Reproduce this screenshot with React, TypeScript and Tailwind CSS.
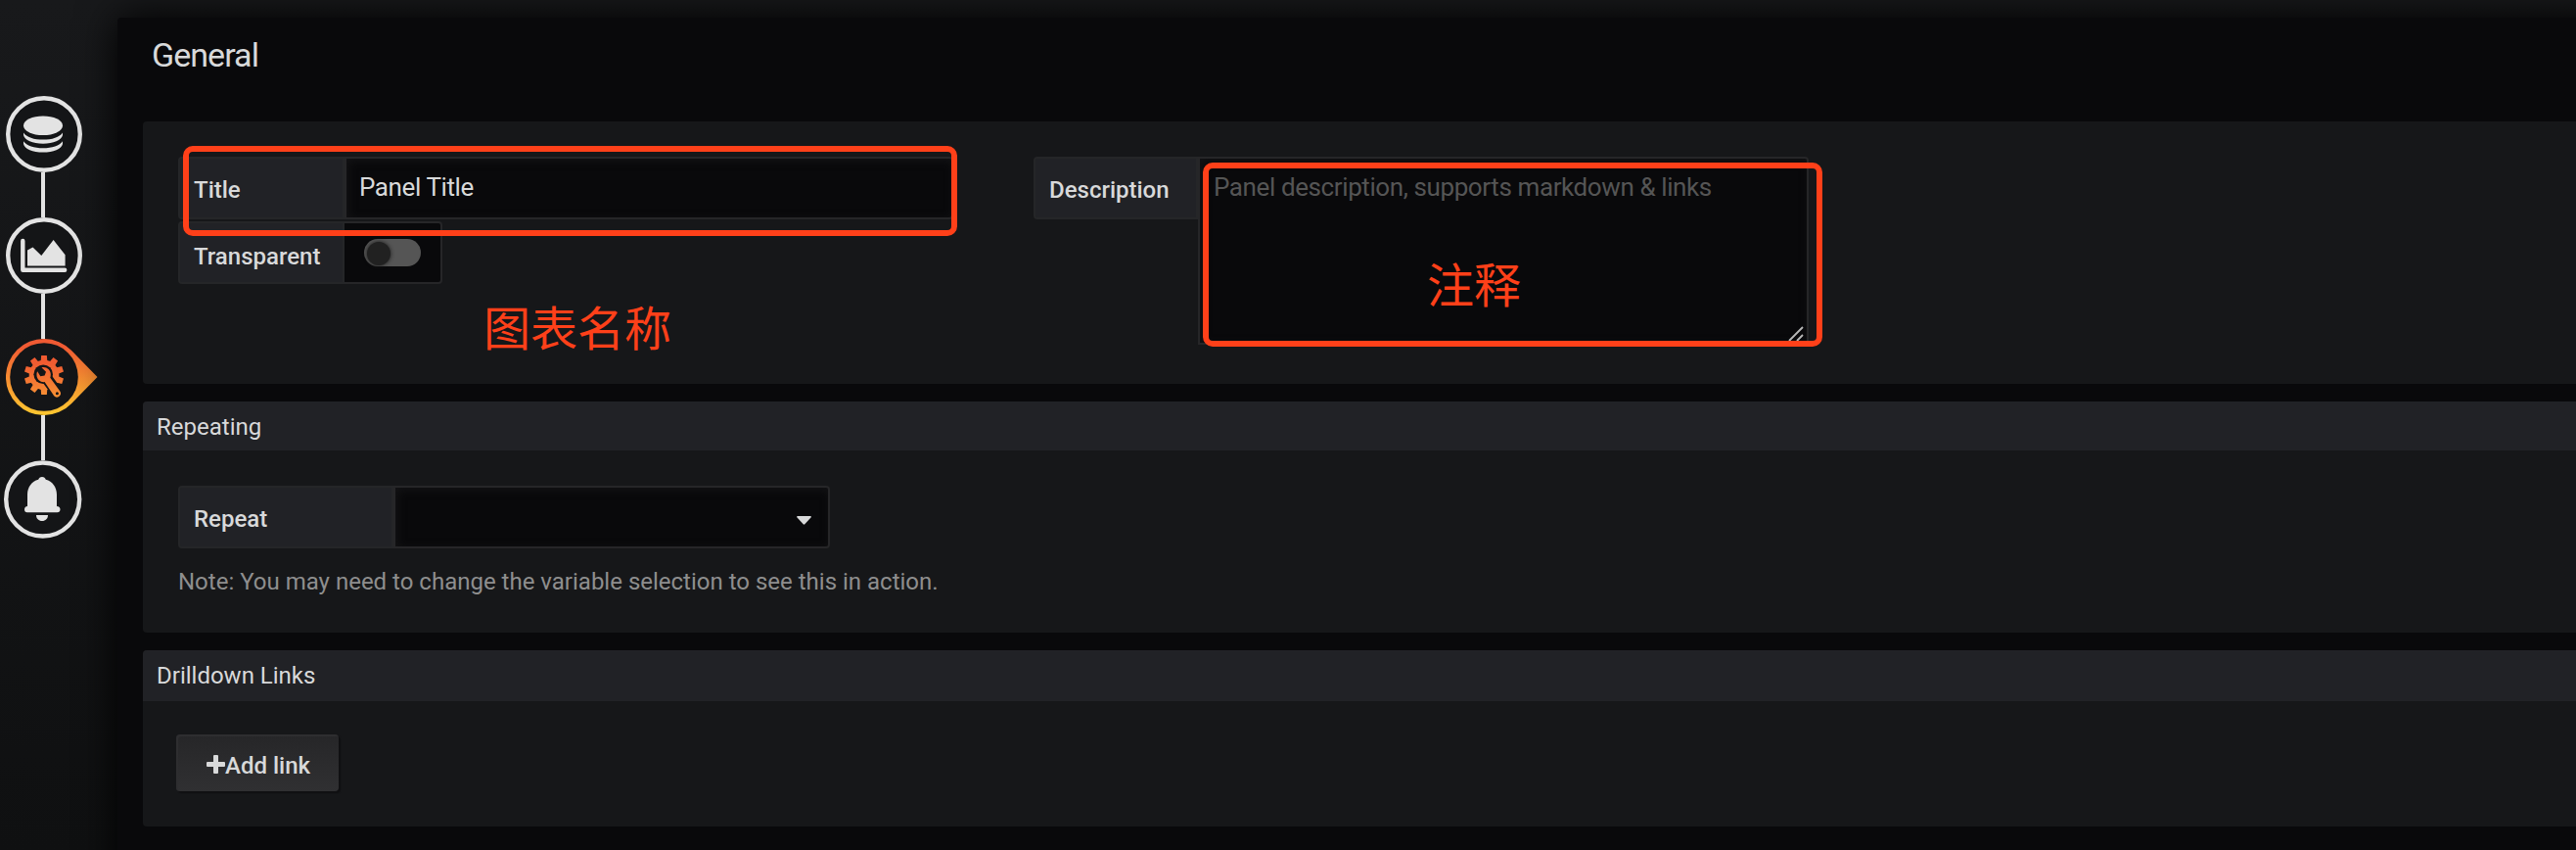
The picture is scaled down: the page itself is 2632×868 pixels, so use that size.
import React from "react";

const TEETH = [0, 36, 72, 108, 144, 180, 216, 252, 288, 324];

function DataIcon() {
  return (
    <svg width="78" height="78" viewBox="0 0 78 78" className="ml-1.5 block" fill="#e3e3e3">
      <circle cx="39" cy="39" r="36.8" fill="#141517" stroke="#e3e3e3" strokeWidth="4.4" />
      <ellipse cx="38" cy="30.3" rx="20" ry="9.8" />
      <path d="M18 37.4C21 42 29 44.6 38 44.6S55 42 58 37.4V40C57 45 48.500 48.700 38 48.700S19 45 18 40Z" />
      <path d="M18 46.200C21 50.800 29 53.200 38 53.200S55 50.800 58 46.200V49C57 54 48.500 57.600 38 57.600S19 54 18 49Z" />
    </svg>
  );
}

function ChartIcon() {
  return (
    <svg width="78" height="78" viewBox="0 0 78 78" className="ml-1.5 block">
      <circle cx="39" cy="39" r="36.8" fill="#141517" stroke="#e3e3e3" strokeWidth="4.4" />
      <path d="M17.300 24V53.800H60.200" fill="none" stroke="#e3e3e3" strokeWidth="4.400" strokeLinecap="round" strokeLinejoin="round" />
      <path d="M22 33.500L27.500 30.500L36.300 39L48.600 23L60.600 38.300V49.500H22Z" fill="#e3e3e3" />
    </svg>
  );
}

function GeneralIcon() {
  return (
    <svg width="94" height="78" viewBox="0 0 94 78" className="ml-1.5 block">
      <defs>
        <linearGradient id="ring" gradientUnits="userSpaceOnUse" x1="0" y1="0" x2="0" y2="78">
          <stop offset="0.1" stopColor="#f05a33" />
          <stop offset="1" stopColor="#fdc830" />
        </linearGradient>
        <linearGradient id="gear" gradientUnits="userSpaceOnUse" x1="0" y1="16" x2="0" y2="60">
          <stop offset="0.2" stopColor="#f15b31" />
          <stop offset="1" stopColor="#f79234" />
        </linearGradient>
        <mask id="cut">
          <rect width="94" height="78" fill="#fff" />
          <circle cx="38.200" cy="36.300" r="9.800" fill="#000" />
          <path d="M40 38L53.500 56.500" stroke="#000" strokeWidth="11.500" strokeLinecap="round" />
        </mask>
      </defs>
      <path d="M66.900 11.800L93.500 39L66.900 66.200A39 39 0 1 1 66.900 11.800Z" fill="url(#ring)" />
      <circle cx="39" cy="39" r="34.800" fill="#141517" />
      <g fill="url(#gear)" mask="url(#cut)">
        <circle cx="39" cy="37" r="15.300" />
        <path
          d={TEETH.map((deg) => {
            const at = (r: number, off: number) => {
              const a = ((deg + off) * Math.PI) / 180;
              return `${39 + r * Math.sin(a)} ${37 - r * Math.cos(a)}`;
            };
            return `M${at(14, -14)}L${at(14, 14)}L${at(20.3, 8)}L${at(20.3, -8)}Z`;
          }).join("")}
        />
      </g>
      <path
        d="M36.500 29.300C41 28 45.600 31.200 45.800 36C45.850 37.500 45.700 38.800 45.300 39.800L55.300 53.500A3.900 3.900 0 0 1 49.200 58.300L39.600 44.100C35.500 44.600 31.700 41.500 31.500 37.200C31.400 35.500 31.700 34.200 32.200 33.200L35.300 38.200L39.600 37.500L41 33.700Z"
        fill="url(#gear)"
      />
      <circle cx="52.400" cy="55.800" r="1.500" fill="#141517" />
    </svg>
  );
}

function BellIcon() {
  return (
    <svg width="80" height="80" viewBox="0 0 80 80" className="ml-1 block" fill="#e3e3e3">
      <circle cx="39.700" cy="40" r="37.500" fill="#141517" stroke="#e3e3e3" strokeWidth="4.400" />
      <path d="M39 17C41 17 42.300 18.300 42.800 19.800C49.500 21.500 54 27.500 54 35V47C56.500 47.200 57.500 48.500 57.500 50.200C57.500 52 56.300 53.300 54.500 53.300H23.800C22 53.300 21 52 21 50.200C21 48.500 22 47.200 24 47V35C24 27.500 28.500 21.500 35.200 19.800C35.700 18.300 37 17 39 17Z" />
      <path d="M33 56H45C45 59.500 42.500 62 39 62S33 59.500 33 56Z" />
    </svg>
  );
}

function Connector() {
  return <div className="ml-[42px] h-[46px] w-1 bg-[#e3e3e3]" />;
}

function Label({ className, children }: { className: string; children: React.ReactNode }) {
  return (
    <div className={`h-16 shrink-0 rounded-l border-2 border-[#252628] bg-[#212226] pl-[14px] text-[24px] font-medium ${className}`}>
      {children}
    </div>
  );
}

export default function App() {
  return (
    <div
      className="flex h-[868px] w-[2632px] overflow-hidden bg-linear-to-b from-[#18191b] to-[#0f1011] text-[#d8d9da]"
      style={{ fontFamily: 'Roboto, "Noto Sans CJK SC", sans-serif' }}
    >
      <nav className="flex w-[120px] shrink-0 flex-col pt-[98px]">
        <DataIcon />
        <Connector />
        <ChartIcon />
        <Connector />
        <GeneralIcon />
        <Connector />
        <BellIcon />
      </nav>

      <main className="mt-[18px] -mr-12 -mb-12 flex-1 rounded-tl bg-[#09090b] pl-[26px] shadow-[0_0_40px_#000000]">
        <h1 className="h-[106px] pl-[9px] text-[34px] leading-[77px] tracking-[-0.95px]">General</h1>

        <section className="relative flex h-[268px] rounded-l bg-[#161719] pt-9 pl-9">
          <div className="w-[874px]">
            <div className="flex">
              <Label className="w-[170px] leading-[65px]">Title</Label>
              <div className="h-16 w-[622px] rounded-r border-2 border-[#262628] bg-[#09090b] pl-[13px] text-[26px] leading-[58px] tracking-[-0.4px] shadow-[inset_2px_2px_10px_#141416]">
                Panel Title
              </div>
            </div>
            <div className="mt-0.5 flex">
              <Label className="w-[170px] leading-[68px]">Transparent</Label>
              <div className="h-16 w-[100px] rounded-r border-2 border-l-0 border-[#262628] bg-[#09090b] pt-4 pl-5">
                <div className="h-7 w-[58px] rounded-full bg-[#555555] pt-[3px] pl-[3px]">
                  <div className="size-6 rounded-full bg-[#212121] shadow-[0_0_4px_#1a1a1a]" />
                </div>
              </div>
            </div>
          </div>
          <Label className="w-[168px] leading-[65px]">Description</Label>
          <div className="relative h-48 w-[624px] rounded-tr border-2 border-[#262628] bg-[#09090b] pl-3.5 text-[26px] leading-[58px] tracking-[-0.4px] text-[#555555] shadow-[inset_2px_2px_10px_#141416]">
            Panel description, supports markdown &amp; links
            <svg width="16" height="16" viewBox="0 0 16 16" className="absolute right-[3px] bottom-px" stroke="#b8b8b8" strokeWidth="1.800">
              <path d="M1 15L15 1M9 15L15 9" />
            </svg>
          </div>

          <div className="absolute top-[25px] left-[41px] h-[92px] w-[791px] rounded-[10px] border-6 border-[#ff4019]" />
          <div className="absolute top-[42px] left-[1083px] h-[188px] w-[633px] rounded-[10px] border-6 border-[#ff4019]" />
          <div className="absolute top-[177px] left-[348px] text-[48px] leading-[72px] text-[#ff4019]">图表名称</div>
          <div className="absolute top-[133px] left-[1312px] text-[48px] leading-[72px] text-[#ff4019]">注释</div>
        </section>

        <section className="mt-[18px] h-[236px] rounded-l bg-[#161719]">
          <h2 className="h-[50px] rounded-tl bg-[#212226] pl-3.5 text-[24px] leading-[53px]">Repeating</h2>
          <div className="pt-9 pl-9">
            <div className="flex">
              <Label className="w-[220px] leading-[65px]">Repeat</Label>
              <div className="flex h-16 w-[446px] justify-end rounded-r border-2 border-[#262628] bg-[#09090b] pt-[29px] pr-[17px] shadow-[inset_2px_2px_10px_#141416]">
                <svg width="15" height="9" viewBox="0 0 15 9" fill="#d8d9da">
                  <path d="M1 0H14Q15.500 .5 14.500 1.600L8.300 8.300Q7.500 9 6.700 8.300L.5 1.600Q-.5 .5 1 0Z" />
                </svg>
              </div>
            </div>
            <p className="pt-4 text-[24px] leading-9 text-[#8e8e8e]">
              Note: You may need to change the variable selection to see this in action.
            </p>
          </div>
        </section>

        <section className="mt-[18px] h-[180px] rounded-l bg-[#161719]">
          <h2 className="h-[52px] rounded-tl bg-[#212226] pl-3.5 text-[24px] leading-[53px]">Drilldown Links</h2>
          <div className="pt-[34px] pl-[34px]">
            <button className="flex h-[58px] w-[166px] items-center rounded bg-linear-to-b from-[#262628] to-[#303032] pt-[3px] pl-[31px] text-[24px] leading-[58px] font-medium shadow-[2px_2px_1px_#101012,inset_2px_2px_0_#2e2e30]">
              <svg width="19" height="19" viewBox="0 0 19 19" fill="#d8d9da">
                <path d="M8 0H11Q12 0 12 1V7H18Q19 7 19 8V11Q19 12 18 12H12V18Q12 19 11 19H8Q7 19 7 18V12H1Q0 12 0 11V8Q0 7 1 7H7V1Q7 0 8 0Z" />
              </svg>
              <span className="pt-[3px]">Add link</span>
            </button>
          </div>
        </section>
      </main>
    </div>
  );
}
